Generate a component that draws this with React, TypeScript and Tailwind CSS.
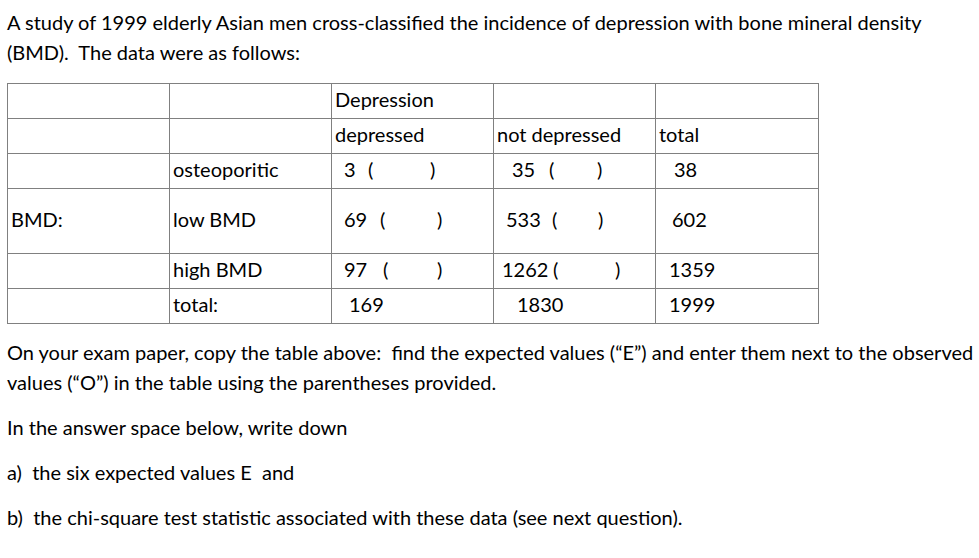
const font = { fontFamily: 'Lato, "Open Sans", sans-serif' }

type Cell = { pl: string; numW?: string; parW?: string; num: string }

function Obs({ pl, numW, parW, num }: Cell) {
    return (
        <div className={`whitespace-pre ${pl}`}>
            {numW ? (
                <>
                    <span className={`inline-block ${numW}`}>{num}</span>
                    <span className={`inline-block ${parW}`}>(</span>
                    <span>)</span>
                </>
            ) : (
                <span>{num}</span>
            )}
        </div>
    )
}

export default function App() {
    const td = 'border border-[#808080] align-middle px-[3px] pt-0 pb-[4px] text-left font-normal leading-[24px]'
    return (
        <div className="bg-white text-black text-[20px] leading-[30px] pl-[7px] pt-[7px] w-[979px] h-[558px]" style={font}>
            <p>
                A study of 1999 elderly Asian men cross-classified the incidence of depression with bone mineral density
                <br />
                (BMD).&nbsp; The data were as follows:
            </p>

            <table className="mt-[16px] border-collapse table-fixed w-[811px] border border-[#333333]">
                <colgroup>
                    <col className="w-[162px]" />
                    <col className="w-[162px]" />
                    <col className="w-[162px]" />
                    <col className="w-[162px]" />
                    <col className="w-[163px]" />
                </colgroup>
                <tbody>
                    <tr className="h-[35px]">
                        <td className={td}></td>
                        <td className={td}></td>
                        <td className={td}>Depression</td>
                        <td className={td}></td>
                        <td className={td}></td>
                    </tr>
                    <tr className="h-[35px]">
                        <td className={td}></td>
                        <td className={td}></td>
                        <td className={td}>depressed</td>
                        <td className={td}>not depressed</td>
                        <td className={td}>total</td>
                    </tr>
                    <tr className="h-[35px]">
                        <td className={td}></td>
                        <td className={td}>osteoporitic</td>
                        <td className={td}>
                            <Obs pl="pl-[9px]" numW="w-[24px]" parW="w-[62px]" num="3" />
                        </td>
                        <td className={td}>
                            <Obs pl="pl-[15px]" numW="w-[37px]" parW="w-[48px]" num="35" />
                        </td>
                        <td className={td}>
                            <Obs pl="pl-[15px]" num="38" />
                        </td>
                    </tr>
                    <tr className="h-[65px]">
                        <td className={td}>BMD:</td>
                        <td className={td}>low BMD</td>
                        <td className={td}>
                            <Obs pl="pl-[9px]" numW="w-[36px]" parW="w-[57px]" num="69" />
                        </td>
                        <td className={td}>
                            <Obs pl="pl-[9px]" numW="w-[46px]" parW="w-[46px]" num="533" />
                        </td>
                        <td className={td}>
                            <Obs pl="pl-[13px]" num="602" />
                        </td>
                    </tr>
                    <tr className="h-[35px]">
                        <td className={td}></td>
                        <td className={td}>high BMD</td>
                        <td className={td}>
                            <Obs pl="pl-[9px]" numW="w-[39px]" parW="w-[54px]" num="97" />
                        </td>
                        <td className={td}>
                            <Obs pl="pl-[5px]" numW="w-[51px]" parW="w-[62px]" num="1262" />
                        </td>
                        <td className={td}>
                            <Obs pl="pl-[10px]" num="1359" />
                        </td>
                    </tr>
                    <tr className="h-[35px]">
                        <td className={td}></td>
                        <td className={td}>total:</td>
                        <td className={td}>
                            <Obs pl="pl-[14px]" num="169" />
                        </td>
                        <td className={td}>
                            <Obs pl="pl-[20px]" num="1830" />
                        </td>
                        <td className={td}>
                            <Obs pl="pl-[10px]" num="1999" />
                        </td>
                    </tr>
                </tbody>
            </table>

            <p className="mt-[13px]">
                On your exam paper, copy the table above:&nbsp; find the expected values (“E”) and enter them next to the observed
                <br />
                values (“O”) in the table using the parentheses provided.
            </p>
            <p className="mt-[15px]">In the answer space below, write down</p>
            <p className="mt-[15px]">a)&nbsp; the six expected values E&nbsp; and</p>
            <p className="mt-[15px]">b)&nbsp; the chi-square test statistic associated with these data (see next question).</p>
        </div>
    )
}
